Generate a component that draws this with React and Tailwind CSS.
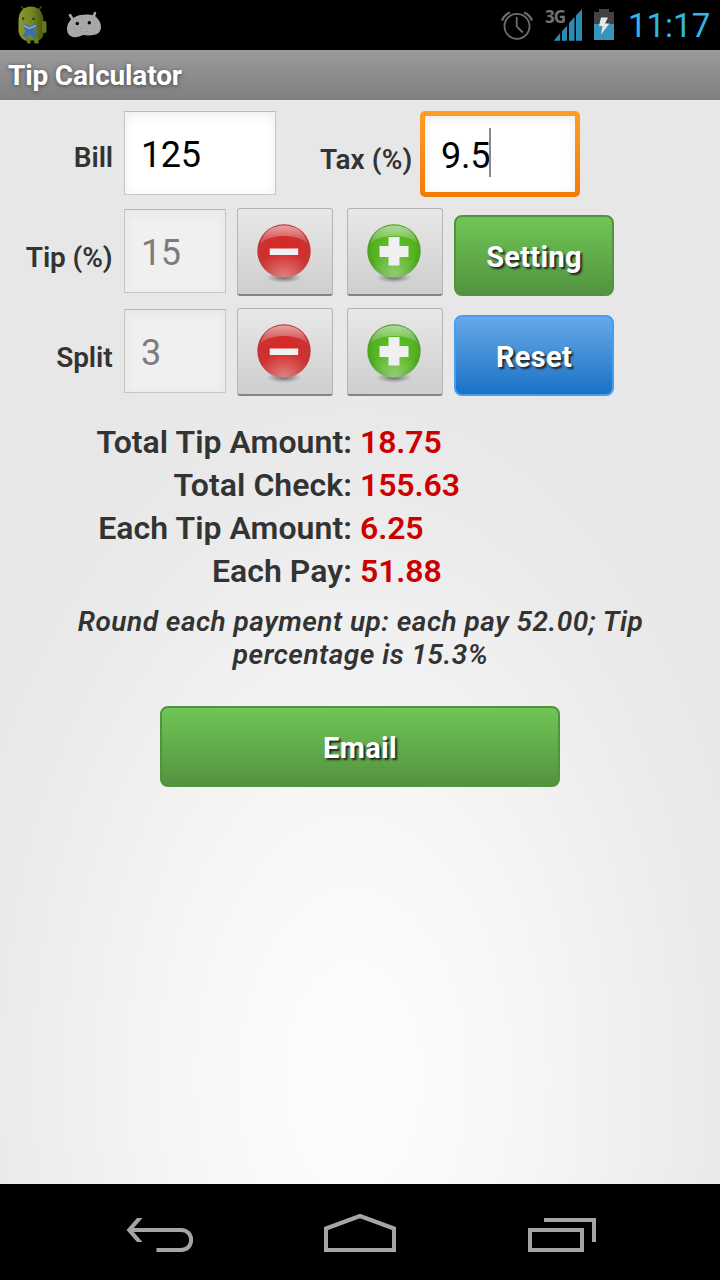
import React from "react";

const results = [
  { label: "Total Tip Amount:", value: "18.75" },
  { label: "Total Check:", value: "155.63" },
  { label: "Each Tip Amount:", value: "6.25" },
  { label: "Each Pay:", value: "51.88" },
];

const StatusBar = () => (
  <div className="flex h-[50px] items-center bg-black">
    {/* Notifications */}
    <svg className="ml-4 h-[50px] w-8 shrink-0" viewBox="16 0 32 50">
      <defs>
        <linearGradient id="droid" x1="0" x2="1">
          <stop offset="0" stopColor="#8a9c34" />
          <stop offset="0.6" stopColor="#6f8320" />
          <stop offset="1" stopColor="#475510" />
        </linearGradient>
      </defs>
      <path d="M21.500 6.500l3 3.500M41.500 6.500l-3 3.500" stroke="#4c5a18" strokeWidth="1.200" />
      <path d="M18.500 23C18 11 24 6.500 31 6.500S43.500 11 43.500 22v11c0 4-2 6-5 7.500H25c-4-2-6-6-6.500-9z" fill="url(#droid)" />
      <rect x="42" y="21" width="4.500" height="12" rx="2" fill="#66761e" />
      <path d="M25.500 38h5v5.500h-3zM33.500 38h5v5.500h-4z" fill="#687b1f" />
      <circle cx="23.200" cy="18.500" r="1.200" fill="#303818" />
      <circle cx="33.500" cy="18.800" r="1.400" fill="#303818" />
      <path d="M23 25l3-1 4 3 4-3 3 2-3 5 3 5-3 2-4.500-3-4 3-3-2 3-5z" fill="#3e6db0" />
      <path d="M23.500 25.500l6 3 6.500-3" stroke="#86a8d4" strokeWidth="1.500" fill="none" />
    </svg>
    <svg className="ml-4 h-[50px] w-10 shrink-0" viewBox="64 0 40 50">
      <path d="M70 15l3 5M95 13l-2 5" stroke="#a8a8a8" strokeWidth="2.600" strokeLinecap="round" />
      <path d="M75 17c6-3 14-3 20-1 4 3 6 7 6 11 0 5-4 8-8 8-4 1-7 0-10 0-3 1-6 3-10 2-4-1-6-4-6-8 0-5 3-10 8-12z" fill="#a8a8a8" />
      <circle cx="77.300" cy="23.500" r="1.700" fill="#000" />
      <circle cx="89.300" cy="22.700" r="1.700" fill="#000" />
      <path d="M81.500 28v1M81.500 31v1M87 31v1" stroke="#777" strokeWidth="0.800" />
    </svg>

    <div className="grow" />

    {/* System icons */}
    <svg className="h-[50px] w-9 shrink-0" viewBox="500 0 36 50" fill="none" stroke="#6e6e6e">
      <circle cx="517" cy="26.300" r="12.500" strokeWidth="1.800" />
      <path d="M516.700 17v9.500l6 6" strokeWidth="1.800" />
      <path d="M502 20.500Q504 15 510 12.500M524 12.500Q530 15 532 20.500" strokeWidth="2.400" />
    </svg>
    <div className="relative ml-[9px] h-[50px] w-9 shrink-0">
      <svg className="h-[50px] w-[37px]" viewBox="545 0 37 50" fill="#2b8cb4">
        <path d="M553.700 40.700l6.500-7.700v7.700zM562 40.700V31.200l5-5.500v15zM569 40.700V23l5.500-6v23.700zM576 40.700V15.500l6-6.500v31.700z" />
      </svg>
      <span className="absolute left-0 top-[7px] font-['Open_Sans'] text-[17px] font-bold leading-5 tracking-[-0.9px] text-[#707070]">3G</span>
    </div>
    <svg className="ml-[12px] h-[50px] w-[22px] shrink-0" viewBox="593 0 22 50">
      <path d="M594 12h5V9h10v3h5v12h-20z" fill="#424242" />
      <path d="M594 24h20v16h-20z" fill="#3794ba" />
      <path d="M601 17.500h7l-3 6h4.500l-8.500 11 1.500-8.500H599z" fill="#e8e8e8" />
    </svg>
    <span className="ml-[13px] w-[92px] whitespace-nowrap pt-px font-[Roboto] text-[33px] font-normal leading-[50px] text-[#33b5e5]">11:17</span>
  </div>
);

const Field = ({ value, width, disabled = false }) => (
  <div
    className={`${width} flex h-[84px] shrink-0 items-center border border-t-[#b8b8b8] border-x-[#c6c6c6] border-b-[#c6c6c6] pl-4 pt-1 text-[36px] tracking-[-0.4px] ${
      disabled ? "bg-[#f0f0f0] text-[#7c7c7c] shadow-[inset_0_3px_12px_#e6e6e6]" : "bg-white text-black shadow-[inset_0_3px_12px_#ededed]"
    }`}
  >
    {value}
  </div>
);

const RoundButton = ({ type }) => (
  <div className="flex h-[88px] w-24 shrink-0 justify-center rounded-[3px] border border-[#b4b4b4] border-b-2 border-b-[#858585] bg-linear-to-b from-[#e8e8e8] to-[#cecece]">
    <svg className="mt-[12px] mr-[2px] h-16 w-[60px]" viewBox="0 0 60 64">
      <defs>
        <radialGradient id="red" cx="0.5" cy="0.5" r="0.6">
          <stop offset="0" stopColor="#d92525" />
          <stop offset="0.65" stopColor="#ce3030" />
          <stop offset="1" stopColor="#b83a3a" />
        </radialGradient>
        <radialGradient id="green" cx="0.5" cy="0.5" r="0.6">
          <stop offset="0" stopColor="#5cc41e" />
          <stop offset="0.65" stopColor="#55b323" />
          <stop offset="1" stopColor="#428f1d" />
        </radialGradient>
        <linearGradient id="gloss" x1="0" y1="0" x2="0" y2="1">
          <stop offset="0" stopColor="#fff" stopOpacity="0.55" />
          <stop offset="1" stopColor="#fff" stopOpacity="0.1" />
        </linearGradient>
        <radialGradient id="glow" cx="0.5" cy="1" r="0.5">
          <stop offset="0" stopColor="#fff" stopOpacity="0.4" />
          <stop offset="1" stopColor="#fff" stopOpacity="0" />
        </radialGradient>
        <radialGradient id="drop">
          <stop offset="0" stopColor="#555" stopOpacity="0.9" />
          <stop offset="1" stopColor="#777" stopOpacity="0" />
        </radialGradient>
      </defs>
      <ellipse cx="30" cy="56.500" rx="18" ry="5.500" fill="url(#drop)" />
      <circle cx="30" cy="30" r="26.700" fill={type === "minus" ? "url(#red)" : "url(#green)"} />
      <circle cx="30" cy="30" r="26.700" fill="url(#glow)" />
      <path d="M6.500 22.500C9 10.500 18 4.500 30 4.500s21 6 23.500 18C47 17 40 15 30 15S13 17 6.500 22.500z" fill="url(#gloss)" />
      {type === "minus" ? (
        <rect x="15.700" y="27.500" width="28.500" height="6.500" fill="#f0f0f0" />
      ) : (
        <path d="M24.500 16h11v9h9v11h-9v8.500h-11V36h-9V25h9z" fill="#f0f0f0" />
      )}
    </svg>
  </div>
);

const Button = ({ children, color = "green", className }) => (
  <div
    className={`flex shrink-0 items-center justify-center rounded-lg border-2 pt-1 text-[29px] font-bold tracking-[0.3px] text-white [text-shadow:2px_2px_2px_#222] ${
      color === "green"
        ? "border-[#53933f] bg-linear-to-b from-[#70c656] to-[#53933f]"
        : "border-[#449def] bg-linear-to-b from-[#65a9e8] to-[#1672c5]"
    } ${className}`}
  >
    {children}
  </div>
);

const Stepper = ({ label, value, children }) => (
  <div className="flex h-[100px] items-start pt-2">
    <span className="w-[112.500px] pt-[34px] text-right text-[28px] font-semibold leading-8 tracking-[-0.1px]">{label}</span>
    <div className="ml-[11.500px] pt-px">
      <Field value={value} width="w-[102px]" disabled />
    </div>
    <div className="ml-[10.500px] flex gap-[14px]">
      <RoundButton type="minus" />
      <RoundButton type="plus" />
    </div>
    <div className="ml-[11.500px] pt-[7px]">{children}</div>
  </div>
);

const App = () => {
  return (
    <div className="flex h-[1280px] w-[720px] flex-col overflow-hidden bg-black font-[Roboto,sans-serif] text-[#333]">
      <StatusBar />

      <div className="flex h-[50px] items-center bg-linear-to-b from-[#9b9b9b] to-[#7f7f7f] pl-2 pt-0.5 text-[28px] font-bold tracking-[-0.150px] text-white [text-shadow:0_1px_4px_#444]">
        Tip Calculator
      </div>

      <main className="h-[1084px] bg-[radial-gradient(390px_648px_at_353px_977px,#fcfcfc_0%,#fbfbfb_18%,#f6f6f6_46%,#f0f0f0_70%,#eaeaea_94%,#e7e7e7_120%)]">
        {/* Bill and tax */}
        <div className="flex h-[100px] items-start pt-[11px]">
          <span className="w-[113px] pt-[31px] text-right text-[28px] font-semibold leading-8 tracking-[-0.1px]">Bill</span>
          <div className="ml-[11px]">
            <Field value="125" width="w-[152px]" />
          </div>
          <span className="ml-11 w-[92px] whitespace-nowrap pt-[33px] text-[28px] font-semibold leading-8 tracking-[0.1px]">Tax (%)</span>
          <div className="ml-2 h-[86px] w-40 rounded-[5px] bg-linear-to-b from-[#ff9d26] to-[#f37a06] p-[5px]">
            <div className="flex h-[76px] items-center bg-white pl-4 text-[36px] tracking-[-0.2px] text-black shadow-[inset_0_3px_12px_#ededed]">
              <span className="pt-[3px]">9.5</span>
              <span className="-ml-px mb-[3px] h-[49px] w-0.5 bg-[#888]" />
            </div>
          </div>
        </div>

        <Stepper label="Tip (%)" value="15">
          <Button className="h-[81px] w-40">Setting</Button>
        </Stepper>
        <Stepper label="Split" value="3">
          <Button color="blue" className="h-[81px] w-40">Reset</Button>
        </Stepper>

        {/* Totals */}
        <div className="mt-[21px] text-[32px] font-semibold leading-[43px]">
          {results.map((row) => (
            <div key={row.label} className="flex gap-2">
              <span className="w-[352px] text-right tracking-[0.050px]">{row.label}</span>
              <span className="tracking-[-0.1px] text-[#c00]">{row.value}</span>
            </div>
          ))}
        </div>

        <p className="mt-[12px] pl-px text-center text-[28px] font-semibold italic leading-[33px] tracking-[0.480px]">
          Round each payment up: each pay 52.00; Tip
          <br />
          percentage is 15.3%
        </p>

        <Button className="mx-auto mt-[35px] h-[81px] w-[400px]">Email</Button>
      </main>

      {/* Navigation */}
      <nav className="flex h-24 items-center bg-black pl-[124px]">
        <svg className="h-24 w-[72px]" viewBox="124 1184 72 96">
          <path d="M131 1230h50c13.500 0 13.500 20 0 20h-24.500" fill="none" stroke="#a5a5a5" strokeWidth="4" />
          <path d="M126.500 1230l10.500-12h5.500l-10.500 12 10.500 12H137z" fill="#a5a5a5" />
        </svg>
        <svg className="ml-[126px] h-24 w-[76px]" viewBox="322 1184 76 96" fill="none" stroke="#a5a5a5" strokeWidth="4">
          <path d="M326 1250v-21.500l34-12.500 34 12.500v21.500z" />
        </svg>
        <svg className="ml-32 h-24 w-[72px]" viewBox="526 1184 72 96" fill="none" stroke="#a5a5a5" strokeWidth="4">
          <path d="M530 1230h52v20h-52zM544 1220h50v22" />
        </svg>
      </nav>
    </div>
  );
};

export default App;
